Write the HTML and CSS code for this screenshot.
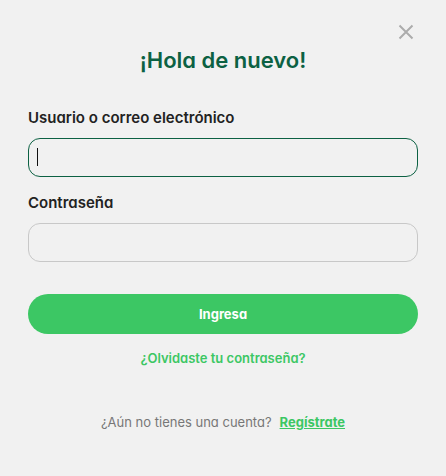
FILE: index.html
```
<!DOCTYPE html>
<html lang="es">
<head>
  <meta charset="UTF-8" />
  <meta name="viewport" content="width=device-width, initial-scale=1.0" />
  <title>Ingresa</title>
  <link rel="stylesheet" href="styles.css">
</head>
<body>
  <main class="login">
    <button class="close" type="button" aria-label="Cerrar">
      <svg width="16" height="16" viewBox="0 0 16 16" fill="none" stroke="#acacac" stroke-width="2">
        <path d="M1.5 1.5l13 13M14.5 1.5l-13 13" />
      </svg>
    </button>
    <h1>¡Hola de nuevo!</h1>

    <form class="form">
      <label for="user">Usuario o correo electrónico</label>
      <div class="field">
        <input class="active" id="user" type="text" />
        <span class="caret"></span>
      </div>

      <label for="password">Contraseña</label>
      <div class="field">
        <input id="password" type="password" />
      </div>

      <button class="submit" type="submit">Ingresa</button>
    </form>

    <a class="forgot" href="#">¿Olvidaste tu contraseña?</a>
    <p class="register">¿Aún no tienes una cuenta? <a href="#">Regístrate</a></p>
  </main>
</body>
</html>
```

FILE: styles.css
```
* {
  box-sizing: border-box;
}
body {
  margin: 0;
  background: #f1f1f1;
  font-family: Inter, "Liberation Sans", sans-serif;
  font-feature-settings: "cv11";
  color: #222;
}
.login {
  display: flex;
  flex-direction: column;
  padding: 24px 28px;
}
.close {
  display: flex;
  align-self: flex-end;
  margin-right: 4px;
  padding: 0;
  border: none;
  background: none;
  cursor: pointer;
}
h1 {
  margin: 4px 0 32px;
  font-size: 22px;
  line-height: 32px;
  font-weight: 600;
  text-align: center;
  color: #0c6143;
}
.form {
  display: flex;
  flex-direction: column;
}
label {
  margin-bottom: 10px;
  font-size: 15px;
  line-height: 20px;
  font-weight: 600;
}
.field {
  position: relative;
  display: flex;
  margin-bottom: 16px;
}
input {
  width: 100%;
  height: 39px;
  padding: 0 8px;
  border: 1px solid #c8c8c8;
  border-radius: 12px;
  outline: none;
  background: transparent;
  font: inherit;
  font-size: 15px;
}
input.active,
input:focus {
  border-color: #0c6143;
}
.caret {
  position: absolute;
  top: 10px;
  left: 9px;
  width: 1px;
  height: 18px;
  background: #111;
}
.submit {
  height: 40px;
  margin-top: 16px;
  border: none;
  border-radius: 20px;
  background: #3cc764;
  font: inherit;
  font-size: 13px;
  font-weight: 700;
  color: #fff;
  cursor: pointer;
}
.forgot {
  align-self: center;
  margin-top: 14px;
  font-size: 13px;
  line-height: 20px;
  font-weight: 600;
  color: #3cc764;
  text-decoration: none;
}
.register {
  display: flex;
  justify-content: center;
  gap: 8px;
  margin: 44px 0 0;
  font-size: 13px;
  line-height: 20px;
  color: #777;
}
.register a {
  font-weight: 700;
  color: #3cc764;
}
```
